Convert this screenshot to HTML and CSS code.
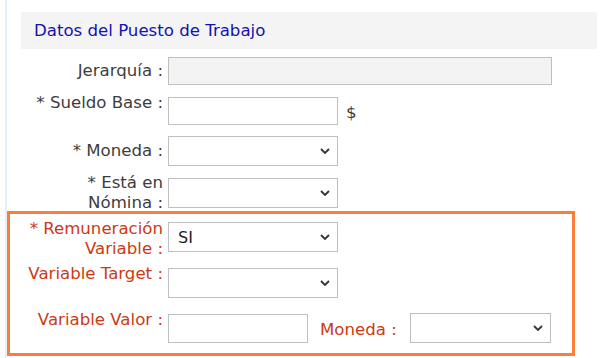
FILE: index.html
```html
<!DOCTYPE html>
<html lang="es">
<head>
  <meta charset="UTF-8">
  <meta name="viewport" content="width=device-width, initial-scale=1.0">
  <title>Datos del Puesto de Trabajo</title>
  <link rel="stylesheet" href="styles.css">
</head>
<body>
  <div class="panel">
    <div class="panel-title">Datos del Puesto de Trabajo</div>

    <div class="form">
      <div class="row row-jerarquia">
        <label class="lbl">Jerarquía&nbsp;:</label>
        <div class="field"><input class="txt txt-wide" type="text" disabled></div>
      </div>

      <div class="row row-sueldo row-top">
        <label class="lbl">* Sueldo Base&nbsp;:</label>
        <div class="field">
          <input class="txt" type="text">
          <span class="unit">$</span>
        </div>
      </div>

      <div class="row row-moneda">
        <label class="lbl">* Moneda&nbsp;:</label>
        <div class="field">
          <div class="select"><select></select><svg class="chev" width="10" height="6" viewBox="0 0 10 6"><path d="M1 1 L5 5 L9 1" fill="none" stroke="#333" stroke-width="1.8"/></svg></div>
        </div>
      </div>

      <div class="row row-nomina">
        <label class="lbl">* Está en Nómina&nbsp;:</label>
        <div class="field">
          <div class="select"><select></select><svg class="chev" width="10" height="6" viewBox="0 0 10 6"><path d="M1 1 L5 5 L9 1" fill="none" stroke="#333" stroke-width="1.8"/></svg></div>
        </div>
      </div>

      <div class="row row-remun alert">
        <label class="lbl">* Remuneración Variable&nbsp;:</label>
        <div class="field">
          <div class="select"><select><option>SI</option></select><svg class="chev" width="10" height="6" viewBox="0 0 10 6"><path d="M1 1 L5 5 L9 1" fill="none" stroke="#333" stroke-width="1.8"/></svg></div>
        </div>
      </div>

      <div class="row row-target row-top alert">
        <label class="lbl">Variable Target&nbsp;:</label>
        <div class="field">
          <div class="select"><select></select><svg class="chev" width="10" height="6" viewBox="0 0 10 6"><path d="M1 1 L5 5 L9 1" fill="none" stroke="#333" stroke-width="1.8"/></svg></div>
        </div>
      </div>

      <div class="row row-valor row-top alert">
        <label class="lbl">Variable Valor&nbsp;:</label>
        <div class="field">
          <input class="txt txt-short" type="text">
          <label class="lbl-inline">Moneda&nbsp;:</label>
          <div class="select select-short"><select></select><svg class="chev" width="10" height="6" viewBox="0 0 10 6"><path d="M1 1 L5 5 L9 1" fill="none" stroke="#333" stroke-width="1.8"/></svg></div>
        </div>
      </div>
    </div>

    <div class="highlight"></div>
  </div>
</body>
</html>
```

FILE: styles.css
```css
body {
  margin: 0;
  height: 358px;
  overflow: hidden;
  background: #fff;
  font-family: "DejaVu Sans", Verdana, sans-serif;
  font-size: 16.6px;
  color: #3d3d3d;
}
.panel {
  position: relative;
  margin-left: 5px;
  border-left: 2px solid #e6eef8;
  padding: 12px 6px 0 14px;
  height: 358px;
  box-sizing: border-box;
}
.panel-title {
  height: 37px;
  line-height: 37px;
  padding-left: 13px;
  background: #f4f4f4;
  color: #1212b0;
}
.form {
  padding-top: 8px;
}
.row {
  display: grid;
  grid-template-columns: 142px 1fr;
  column-gap: 5px;
  align-items: center;
}
.lbl {
  text-align: right;
  line-height: 20px;
}
.row-top .lbl {
  align-self: start;
}
.row-top .field {
  align-self: start;
  margin-top: 4px;
}
.field {
  display: flex;
  align-items: center;
}
.alert .lbl,
.alert .lbl-inline {
  color: #cc3a14;
}

/* vertical spacing between rows */
.row-sueldo { margin-top: 8px; }
.row-moneda { margin-top: 11px; }
.row-nomina { margin-top: 7px; }
.row-remun { margin-top: 6px; }
.row-remun .field { align-self: start; margin-top: 3px; }
.row-target { margin-top: 5px; }
.row-valor { margin-top: 12px; }
.row-valor .field { margin-top: 3px; }

.txt {
  box-sizing: border-box;
  width: 170px;
  height: 28px;
  margin: 0;
  border: 1px solid #bfbfbf;
  border-radius: 0;
  background: #fff;
  font: inherit;
}
.txt-wide {
  width: 384px;
  background: #f3f3f3;
}
.txt-short {
  width: 140px;
  height: 29px;
}
.unit {
  margin-left: 8px;
  margin-top: 2px;
  color: #3d3d3d;
}
.select {
  position: relative;
  width: 170px;
  height: 30px;
}
.select select {
  box-sizing: border-box;
  width: 100%;
  height: 100%;
  margin: 0;
  padding: 0 24px 0 9px;
  border: 1px solid #bfbfbf;
  border-radius: 0;
  background: #fff;
  font: inherit;
  font-size: 16px;
  color: #222;
  appearance: none;
  -webkit-appearance: none;
}
.chev {
  position: absolute;
  right: 8px;
  top: 12px;
}
.select-short {
  width: 141px;
}
.lbl-inline {
  margin-left: 12px;
  margin-right: 13px;
  margin-top: 2px;
}
.highlight {
  position: absolute;
  left: 0;
  top: 211px;
  width: 568px;
  height: 145px;
  box-sizing: border-box;
  border: 3px solid #fb7d3b;
  pointer-events: none;
}
```
